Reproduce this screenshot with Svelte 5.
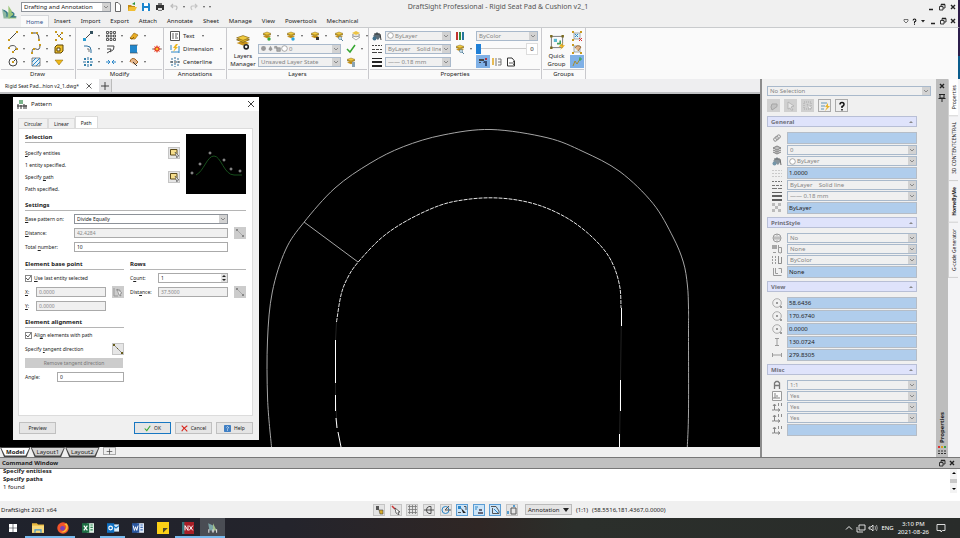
<script>

	// Icons, each drawn on a 10 x 10 grid:
	const node = (x, y) => `<rect x="${x}" y="${y}" width="2" height="2" fill="#c89a1e"/>`;
	const sheets = '<path d="M1 5.6 5 4.2 9 5.6 5 7.2Z" fill="#c8921a"/><path d="M1 3.6 5 2.2 9 3.6 5 5.2Z" fill="#e8bc2c" stroke="#7a5c10" stroke-width=".5"/><path d="M1 2.4 5 1 9 2.4 5 4Z" fill="#f1cb3f" stroke="#7a5c10" stroke-width=".4"/>';
	const icons = {
		line: `<path d="M1.5 8.5 8.5 1.5" stroke="#444"/>${node(0, 8)}${node(8, 0)}`,
		arc: `<path d="M2 2Q8 1 8 8" stroke="#444" fill="none"/>${node(0, 1)}${node(7, 8)}${node(5, 1)}`,
		points: `${node(1, 0)}${node(7, 1)}${node(4, 4)}${node(1, 8)}${node(7, 7)}<path d="M3 3 4 4M6 6 7 7M7 3 6 4" stroke="#555"/>`,
		polyline: `<path d="M1 4A3.5 3 0 1 1 8 5L5 8" stroke="#555" fill="none"/>${node(0, 3)}${node(8, 4)}${node(4, 7)}`,
		spline: `<path d="M1 9Q1 3 5 5T9 1" stroke="#555" fill="none"/>${node(0, 8)}${node(2, 4)}${node(8, 0)}`,
		box: '<path d="M1 3 3 1H9V7L7 9H1Z" fill="#efc02c" stroke="#5e4708"/><path d="M3 4H6V7H3Z" fill="#fff" stroke="#5e4708"/>',
		circle: '<circle cx="5" cy="5" r="4" fill="none" stroke="#444"/><path d="M5 5 8 2" stroke="#444"/><rect x="4" y="4" width="2" height="2" fill="#c89a1e"/>',
		hatch: '<path d="M1 1H9V9H1Z" fill="#e3f1fa" stroke="#555" stroke-width=".7"/><path d="M1 5 5 1M1 9 9 1M5 9 9 5" stroke="#2a86c8"/>',
		mask: '<path d="M1 3H9L5 8Z" fill="#efb91a" stroke="#8a6506" stroke-width=".5"/>',
		move: '<path d="M2 8 8 2" stroke="#444"/><rect x="0" y="7" width="3" height="3" fill="#2a9bd0"/><rect x="7" y="0" width="3" height="3" fill="#34515f"/>',
		pattern: '<path d="M.5 .5h2v2h-2ZM4 .5h2v2H4ZM7.500 .5h2v2h-2ZM.5 4h2v2h-2ZM4 4h2v2H4ZM7.500 4h2v2h-2ZM.5 7.500h2v2h-2ZM4 7.500h2v2H4ZM7.500 7.500h2v2h-2Z" fill="none" stroke="#333" stroke-width=".8"/>',
		eraser: '<path d="M1 7 5 2 9 4 6 8H2Z" fill="#e9ad24" stroke="#8a5d08" stroke-width=".6"/><path d="M1 7 3 8 5 6" stroke="#8a5d08" fill="none"/>',
		fillet: '<path d="M1 2H4Q8 2 8 6V9" stroke="#2a6f9e" fill="none"/><path d="M4 5H6V8" stroke="#777" fill="none"/>',
		offset: '<path d="M1 2H8Q9 6 4 8M1 5H5Q6 7 1 9" stroke="#444" fill="none"/>',
		stretch: '<path d="M1 1H8V9H1Z" fill="#2387cb"/><path d="M1 1H9M1 9H9" stroke="#444" stroke-width=".6"/>',
		explode: '<path d="M0 5H10" stroke="#555" stroke-width=".7"/><path d="M5 1 6 3 8 2 7 4 9 5 7 6 8 8 6 7 5 9 4 7 2 8 3 6 1 5 3 4 2 2 4 3Z" fill="#e5432d"/><circle cx="5" cy="5" r="1.300" fill="#f7c325"/>',
		scatter: '<path d="M5 0V3M5 7V10M0 5H3M7 5H10" stroke="#2a6f9e"/><path d="M4 4H6V6H4ZM1 1H3V3H1ZM7 1H9V3H7ZM1 7H3V9H1ZM7 7H9V9H7Z" fill="#3582ac"/>',
		split: '<path d="M0 5H4M6 5H10" stroke="#2a86c8"/><path d="M2 3 4 5 2 7M8 3 6 5 8 7" stroke="#2a86c8" fill="none"/>',
		edit: '<path d="M1 5Q2 0 6 2L9 5 6 8" fill="#e3b58b" stroke="#a46522"/><path d="M4 5 8 9" stroke="#333"/>',
		text: '<path d="M.5 .5H9.500V9.500H.5Z" fill="#fff" stroke="#555"/><path d="M2 3H4M5 3H8M2 5H4M5 5H7M2 7H4M5 7H8" stroke="#333" stroke-width=".8"/>',
		dimension: '<path d="M1 1V6M9 2V9M1 8H9" stroke="#2a86c8"/><path d="M6 0 3 4H5L3 8 8 3H6L8 0Z" fill="#ecb820"/>',
		centerline: '<path d="M5 0V4M5 6V10M2 1V9M8 1V9" stroke="#2a6f9e" stroke-dasharray="2 1"/><path d="M0 5H10" stroke="#444" stroke-dasharray="3 1"/>',
		layersGear: `${sheets}<circle cx="7" cy="8" r="1.300" fill="#fff" stroke="#222"/>`,
		layerOn: `${sheets}<circle cx="7" cy="8" r="1.700" fill="#36a33c"/>`,
		layerFreeze: `${sheets}<circle cx="7" cy="8" r="1.700" fill="#29a4dd"/>`,
		layerLock: `${sheets}<rect x="6" y="6" width="3" height="3" fill="#333"/>`,
		layerFind: `${sheets}<circle cx="6" cy="7" r="1.500" fill="#d7ecf8" stroke="#56819c" stroke-width=".7"/><path d="M7 8 9 10" stroke="#56819c"/>`,
		layerWhite: '<path d="M1 6 5 5 9 6 5 9ZM1 4 5 2 9 4 5 6Z" fill="#fff" stroke="#888" stroke-width=".7"/><path d="M1 2 5 0 9 2 5 4Z" fill="#edc445"/>',
		layerState: `${sheets}<path d="M6 5H9V10H6Z" fill="#8aa4b4"/>`,
		check: '<path d="M1 5 4 8 9 1" stroke="#35a630" stroke-width="1.500" fill="none"/>',
		cross: '<path d="M1 1Q4 4 9 9M9 1Q4 4 1 9" stroke="#d9251c" stroke-width="1.600" fill="none"/>',
		help: '<rect x="0" y="0" width="10" height="10" rx="1" fill="#3f7fc4"/><path d="M3.500 3.500Q5 1 6.500 3.500Q6 5 5 5.500V6.500M5 7.500V8.500" stroke="#fff" fill="none"/>',
		bulb: '<circle cx="5" cy="5" r="3.500" fill="#999"/>',
		drop: '<path d="M5 1 8 6 5 9 2 6Z" fill="#999"/>',
		lock: '<path d="M1 5V2H4V5M4 4H9V9H4Z" fill="#aaa" stroke="#888"/>',
		ring: '<circle cx="5" cy="5" r="4" fill="#fff" stroke="#888"/>',
		bucket: '<path d="M1 5 5 1 9 5 6 9Z" fill="#5b6c76"/><path d="M2 3H8L9 9" stroke="#333" fill="none"/><circle cx="2.500" cy="7.500" r="2" fill="#3f6f8b"/>',
		lineStyle: '<path d="M0 1.500H10" stroke="#444" stroke-dasharray="2 1"/><path d="M0 5.500H10" stroke="#444" stroke-dasharray="3 1"/><path d="M0 8.500H10" stroke="#444" stroke-dasharray="5 1"/>',
		lineWeight: '<path d="M0 1.500H10" stroke="#222"/><path d="M0 5H10M0 9H10" stroke="#222" stroke-width="2"/>',
		colors: '<path d="M2 1V9" stroke="#c2342d" stroke-width="2"/><path d="M5 1V9" stroke="#338d3c" stroke-width="2"/><path d="M8 1V9" stroke="#27769e" stroke-width="2"/>',
		match: '<path d="M1 2H6V4H1ZM1 5H3V6H1Z" fill="#444"/><path d="M6 4H9V9H7V6H5Z" fill="#394e75"/><path d="M7 1H9V3H7Z" fill="#a34"/>',
		list: '<path d="M1 1V8" stroke="#e0a61d" stroke-width="1.500"/><path d="M4 1V9M6 2H9V8H6M6 5H9" stroke="#777" fill="none"/>',
		page: '<path d="M1.500 1H6L8.500 4V9H1.500Z" fill="#fff" stroke="#333"/><path d="M3 6H9M7 4 9 6 7 8" stroke="#333" fill="none" stroke-width=".8"/>',
		group: `<path d="M1.500 1.500H8.500V8.500H1.500Z" stroke="#777" stroke-width=".6" fill="none"/><path d="M.7 .7H2.200V2.200H.7ZM7.800 .7H9.300V2.200H7.800ZM.7 7.800H2.200V9.300H.7Z" fill="#7a6a1e"/><path d="M3 3H5V5H3Z" fill="#59b8cf"/><path d="M5 6H7V4" stroke="#43a05f" fill="none"/><path d="M9 5 6 8H8L7 10 10 7H8Z" fill="#e9ae12"/>`,
		ungroup: `<path d="M2 2H8V8H2Z" stroke="#777" stroke-width=".6" fill="#e3f1f5"/>${node(0, 0)}${node(8, 0)}${node(0, 8)}<path d="M3 3 6 6M6 3 3 6" stroke="#2a86c8"/><path d="M7 7 10 10M10 7 7 10" stroke="#d33"/>`,
		groupEdit: `<path d="M2 2H8V8H2Z" stroke="#777" stroke-width=".6" fill="#e3f1f5"/>${node(0, 0)}${node(0, 8)}${node(8, 8)}<path d="M3 4Q5 0 9 3L6 7" fill="#e3b58b" stroke="#8d5a1e" stroke-width=".8"/>`,
		groupSelect: '<path d="M1 9 3 4 5 7 8 2" stroke="#a58d30" fill="none"/><path d="M7 2H10M8 0V4" stroke="#3aa64a"/>',
		fileNew: '<path d="M2.500 .5H5L7.500 3V9.500H2.500Z" fill="#fff" stroke="#444" stroke-width=".8"/>',
		fileOpen: '<path d="M1 9V3H4L5 4H8V9Z" fill="#c38a12"/><path d="M2 5H10L8 9H1Z" fill="#f1be33"/><path d="M5 2 8 0 8 3Z" fill="#2b9136"/>',
		save: '<path d="M1 1H8L9 2V9H1Z" fill="#1d86ce"/><path d="M3 1H7V4H3ZM3 6H7V9H3Z" fill="#fff"/>',
		print: '<path d="M3 1H7V4H3ZM3 7H7V9H3Z" fill="#777"/><path d="M1 3H9V8H1Z" fill="#333"/><path d="M3 6H7V8H3Z" fill="#ddd"/>',
		undo: '<path d="M2 4H7Q9 5 7 8M4 2 2 4 4 6" stroke="#bbb" fill="none" stroke-width="1.200"/>',
		redo: '<path d="M8 4H3Q1 5 3 8M6 2 8 4 6 6" stroke="#c5c5c5" fill="none" stroke-width="1.200"/>',
		min: '<path d="M3 7.500H7" stroke="#222" stroke-width="1.500"/>',
		restore: '<path d="M4 4V2.500H8V6H6M2.500 4.500H6V8H2.500Z" fill="none" stroke="#222" stroke-width=".9"/><path d="M4 2.500H8" stroke="#222" stroke-width="1.500"/>',
		close: '<path d="M3 3 7 7M7 3 3 7" stroke="#222" stroke-width="1.400"/>',
		thinClose: '<path d="M2.500 2.500 7.500 7.500M7.500 2.500 2.500 7.500" stroke="#333" stroke-width=".8"/>',
		caret: '<path d="M3 4H7L5 6.500Z" fill="#222"/>',
		heart: '<path d="M3 3.500H7V5L5 7 3 5Z" stroke="#555" fill="none" stroke-width=".8"/>',
		pin: '<path d="M2 1.500H8M3 1V5H7V1M1.500 5.500H8.500M5 5V9" stroke="#222" fill="none"/>',
		plus: '<path d="M5 1V9M1 5H9" stroke="#333" stroke-width=".9"/>',
		pick: '<path d="M1.500 1.500H8V7H1.500Z" fill="#f6de8c" stroke="#5c4b1b"/><path d="M6 4 10 8 8 8 8 10Z" fill="#fff" stroke="#333" stroke-width=".5"/>',
		pickGrey: '<path d="M1 1V9H5M3 3H7V6" fill="none" stroke="#999"/><path d="M4 2 9 6 7 7 8 9 6 8Z" fill="#eee" stroke="#777" stroke-width=".6"/>',
		slope: '<path d="M1 1 9 9" stroke="#555" stroke-width=".6"/><path d="M0 0H2V2H0ZM8 8H10V10H8ZM4 4H5V5H4Z" fill="#665c1c"/>',
		slopeGrey: '<path d="M1 1 9 9" stroke="#999" stroke-width=".7"/><path d="M1 1H3V3H1ZM7 7H9V9H7Z" fill="#888"/>',
		link: '<rect x="1" y="4" width="5" height="3" rx="1" transform="rotate(-45 4 5)" fill="none" stroke="#777"/><rect x="4" y="3" width="5" height="3" rx="1" transform="rotate(-45 6 5)" fill="none" stroke="#777"/>',
		layersGrey: '<path d="M1 3 5 1 9 3 5 5ZM1 5 5 7 9 5M1 7 5 9 9 7" fill="#aaa" stroke="#555"/>',
		scale: '<path d="M0 2.500H10M0 5.500H10M0 8.500H10" stroke="#bbb" stroke-dasharray="2 1"/>',
		grid9: '<path d="M0 0H3V3H0ZM6 0H9V3H6ZM3 3H6V6H3ZM0 6H3V9H0ZM6 6H9V9H6Z" fill="#a5a5a5"/>',
		globe: '<circle cx="5" cy="5" r="4" fill="none" stroke="#777"/><path d="M5 1V9M1 5H9M3 3V7M7 3V7" stroke="#777" stroke-width=".7"/>',
		table: '<path d="M0 1H5V5H0Z" fill="#888"/><path d="M1 8.500H4M6.500 1V8.500L9 9M7 3.500H9.500V9" stroke="#777" fill="none"/>',
		bars: '<path d="M.5 1V9M3.500 1V9" stroke="#777" stroke-dasharray="2 1"/><path d="M6.500 1V9M9.500 2V8.500H6" stroke="#666" fill="none"/>',
		axes: '<path d="M1.500 1V8.500H9.500M3.500 1V6.500H6M6.500 1.500H9.500V6" stroke="#777" fill="none"/>',
		target: '<circle cx="5" cy="5" r="4.300" fill="none" stroke="#777" stroke-width=".8"/><path d="M4 4H6V6H4Z" fill="#777"/><path d="M8 8H10V10H8Z" fill="#777"/>',
		height: '<path d="M3 1.500H7M3 8.500H7M5 2V8" stroke="#777"/>',
		width: '<path d="M.5 3V7M9.500 3V7M1 5H9" stroke="#777"/>',
		letter: '<path d="M2.500 9V3L4 1.500H6L7.500 3V9M2.500 5.500H7.500" stroke="#444" stroke-width="1.300" fill="none"/>',
		ucsBox: '<path d="M.5 .5H9.500V9.500H.5Z" fill="#fff" stroke="#777"/><path d="M3 2V7H8M5 4V6M1 7H3" stroke="#555" fill="none"/>',
		ucs: '<path d="M2.500 3V8H7M1 4 2.500 2 4 4M6 6.500 8 8 6 9.500M0 8H2" stroke="#444" fill="none" stroke-width=".9"/><path d="M6 1H7V4H6ZM9 1H10V4H9Z" fill="#666"/>',
		hand: '<path d="M3 3H8Q9 6 6 7L3 9 2 6Z" fill="#c2c2c2" stroke="#a5a5a5"/>',
		arrow: '<path d="M2 1 8 5 5 6 7 9 5 9 4 7 2 8Z" fill="#e5e5e5" stroke="#aaa" stroke-width=".7"/>',
		arrowBox: '<path d="M1 1H8V8H1Z" fill="none" stroke="#aaa" stroke-dasharray="1 1"/><path d="M4 3 9 7 6 8Z" fill="#eee" stroke="#aaa" stroke-width=".6"/>',
		quick: '<path d="M1 2H7M1 5H5M1 8H4" stroke="#6295b5"/><path d="M8 2 5 6H7L5 10 10 5H8Z" fill="#e8b42b"/>',
		question: '<path d="M3 3.500Q3 1.500 5 1.500T7 3.500Q7 5 5 5.500V7M5 8V9.500" stroke="#111" stroke-width="1.500" fill="none"/>',
		palette: '<path d="M1 1H3V3H1Z" fill="#d33"/><path d="M4 1H6V3H4Z" fill="#dba11c"/><path d="M7 1H9V3H7Z" fill="#3c9c46"/><path d="M1 6H9M1 8.500H9" stroke="#333" stroke-dasharray="2 1"/>',
		snapBulb: '<path d="M2 1H5V5H2Z" fill="#555"/><path d="M5 5H9V9H6Z" fill="#d8ac28" stroke="#444" stroke-width=".6"/>',
		snapArrow: '<path d="M1 1 4 4" stroke="#c33" stroke-width="1.500"/><path d="M4 3 9 7 7 7 8 10 5 8Z" fill="#fff" stroke="#333" stroke-width=".7"/>',
		grid: '<path d="M1 1.500H10M1 4.500H10M1 7.500H10M2.500 0V9M5.500 0V9M8.500 0V9" stroke="#777" stroke-width=".8"/>',
		ortho: '<path d="M0 5H10M2.500 5A3.500 3.500 0 0 1 5 1.500H7V8.500H5A3.500 3.500 0 0 1 2.500 5" stroke="#444" fill="none" stroke-width=".9"/>',
		polar: '<circle cx="4.500" cy="5" r="3.500" fill="none" stroke="#2a86c8"/><path d="M4 5H10M4 5 8 1" stroke="#555"/>',
		esnap: '<path d="M1 1H4V4H1Z" fill="#2a86c8"/><path d="M4 3 9 8 6 8Z" fill="#222"/><path d="M1 7.500H4M7 1.500H9V5" stroke="#555" fill="none"/>',
		etrack: '<path d="M1 2H4M1 4H3" stroke="#2a86c8"/><path d="M5 4H8V6H5ZM4 7H9V9H4Z" fill="#667"/>',
		lasso: '<path d="M1 1.500H6L9 6V8.500H2.500V3" stroke="#555" fill="none"/><path d="M4 4 8 8" stroke="#2a86c8"/>',
		dynamic: '<path d="M4 3H9V9H4Z" fill="none" stroke="#555"/><path d="M1 6V9M7 0V2" stroke="#2a86c8" stroke-width="1.500"/>',
		pattern2: '<path d="M2 1H6V5H2Z" fill="#7ab48b"/><path d="M0 7H10M1 5V10M4 6V10M7 5V10M9 6V10" stroke="#333"/>',
		logo: '<path d="M0 3 5 6V9H1Z" fill="#8fb8a0"/><path d="M4 1 9 9H4Z" fill="#9cc67a"/><path d="M1 4Q4 5 3 8M6 5Q9 6 6 8H9" stroke="#2d7287" fill="none" stroke-width=".8"/>',
		windows: '<path d="M1 1H4.700V4.700H1ZM5.300 1H9V4.700H5.300ZM1 5.300H4.700V9H1ZM5.300 5.300H9V9H5.300Z" fill="#fff"/>',
		explorer: '<path d="M0 1H4L5 2H10V9H0Z" fill="#e8b83d"/><path d="M0 3H10V9H0Z" fill="#f8da7c"/><path d="M2 9V6H8V9H7V7H3V9Z" fill="#3f94cf"/>',
		firefox: '<circle cx="5" cy="5" r="4.800" fill="#f2532c"/><path d="M8 1Q10 4 8 7T2 8Q5 9 7 6T6 2Z" fill="#fbbd30"/><circle cx="4.600" cy="5.300" r="2" fill="#7a43b8"/>',
		excel: '<path d="M4 1H10V9H4Z" fill="#dff0e5"/><path d="M7 2.500H9M7 4.500H9M7 6.500H9" stroke="#2f8a57"/><path d="M0 1H6V9H0Z" fill="#1d7044"/><path d="M1.500 3 4.500 7M4.500 3 1.500 7" stroke="#fff"/>',
		outlook: '<path d="M5 2H10V8H5Z" fill="#d7ecfb"/><path d="M5 3 7.500 5 10 3" stroke="#1274c4" fill="none"/><path d="M0 1H6V9H0Z" fill="#0f6fc0"/><circle cx="3" cy="5" r="1.500" fill="none" stroke="#fff"/>',
		word: '<path d="M4 1H10V9H4Z" fill="#e1eaf7"/><path d="M7 2.500H9M7 4.500H9M7 6.500H9" stroke="#3f6fb8"/><path d="M0 1H6V9H0Z" fill="#2a57a0"/><path d="M1 3 2 7 3 4 4 7 5 3" stroke="#fff" fill="none" stroke-width=".8"/>',
		notes: '<path d="M0 0H10V10H0Z" fill="#fcd116"/><path d="M5 9V5H9Z" fill="#4f4a2b"/>',
		nx: '<path d="M0 0H10V10H0Z" fill="#a81f26"/><path d="M0 0H2V10H0Z" fill="#34777c"/><path d="M2.500 7V3L5 7V3M6 3 9 7M9 3 6 7" stroke="#fff" fill="none" stroke-width=".8"/>',
		draftsight: '<path d="M1 1 5 3V7H2Z" fill="#79a4a6"/><path d="M5 1 8 7H5Z" fill="#a2c08c"/><path d="M1.500 6V9M4 7.500H6M5 6V9M8 6V9" stroke="#ddd" stroke-width=".9"/>',
		up: '<path d="M2 6.500 5 3.500 8 6.500" stroke="#eee" fill="none"/>',
		monitor: '<path d="M3 2H9V7H3ZM1 4V9H7" stroke="#eee" fill="none" stroke-width=".9"/>',
		speaker: '<path d="M1 4H3L5 2V8L3 6H1Z" stroke="#eee" fill="none" stroke-width=".9"/><path d="M7 3Q8 5 7 7M8.500 2Q10 5 8.500 8" stroke="#bbb" fill="none" stroke-width=".8"/>',
		bubble: '<path d="M1 1.500H9V7.500H6.500L5 9V7.500H1Z" stroke="#eee" fill="none" stroke-width=".9"/>'
	};

	// Ribbon contents; a trailing "+" marks a button that opens a menu:
	const menus = ['Home', 'Insert', 'Import', 'Export', 'Attach', 'Annotate', 'Sheet', 'Manage', 'View', 'Powertools', 'Mechanical'];
	const draw = ['line+', 'arc+', 'points+', 'polyline+', 'spline+', 'box', 'circle+', 'hatch+', 'mask'];
	const modify = ['move+', 'pattern+', 'eraser+', '', 'fillet+', 'offset', 'stretch', 'explode', 'scatter+', 'split+', 'edit+', ''];
	const annotations = [['text', 'Text', true], ['dimension', 'Dimension', true], ['centerline', 'Centerline', false]];
	const layerTools = ['layerOn+', 'layerFreeze+', 'layerLock+', 'layerFind', 'layerWhite+'];

	// Property sections: icon, label, value, kind, icon inside the field
	const solidLine = 'ByLayer\u00a0\u00a0\u00a0\u00a0Solid line';
	const sections = [
		['General', [
			['link', 'Hyperlink', '', 'text'],
			['layersGrey', 'Layer', '0', 'list'],
			['bucket', 'Line color', 'ByLayer', 'list', 'ring'],
			['scale', 'Line scale', '1.0000', 'text'],
			['lineStyle', 'Line style', solidLine, 'list'],
			['lineWeight', 'Line weight', '—— 0.18 mm', 'list'],
			['grid9', 'Transparency', 'ByLayer', 'text']
		]],
		['PrintStyle', [
			['globe', 'Print style', 'No', 'list'],
			['table', 'Print table', 'None', 'list'],
			['bars', 'Style type', 'ByColor', 'list'],
			['axes', 'Attached to', 'None', 'text']
		]],
		['View', [
			['target', 'Center X', '58.6436', 'text'],
			['target', 'Center Y', '170.6740', 'text'],
			['target', 'Center Z', '0.0000', 'text'],
			['height', 'Height', '130.0724', 'text'],
			['width', 'Width', '279.8305', 'text']
		]],
		['Misc', [
			['letter', 'Annotation scale', '1:1', 'list'],
			['ucsBox', 'Icon on', 'Yes', 'list'],
			['ucs', 'Icon at origin', 'Yes', 'list'],
			['ucs', 'Per viewport', 'Yes', 'list'],
			['ucs', 'Coordinate system', '', 'text']
		]]
	];
	const sideTabs = ['Properties', '3D CONTENTCENTRAL', 'HomeByMe', 'G-code Generator'];
	const statusTools = ['snapBulb', 'snapArrow', 'grid', 'ortho', 'polar', 'esnap', 'etrack', 'lasso', 'dynamic'];
	const statusOn = ['esnap', 'etrack', 'lasso'];
	const apps = ['windows', 'explorer', 'firefox', 'excel', 'outlook', 'word', 'notes', 'nx', 'draftsight'];
	const runningApps = ['explorer', 'firefox', 'outlook', 'nx', 'draftsight'];

	// Cushion outlines in drawing units:
	const outer = [[271.5, 353], [267.6, 305], [267.5, 246], [272.3, 198], [285.5, 156], [304, 128.3], [335, 94], [370, 69.3], [403.3, 52.7], [443, 41], [491, 35.5], [547, 43.7], [583, 57.5], [620, 77.7], [653, 109.5], [673, 143], [683.3, 168], [687.4, 191], [688.5, 214], [688.5, 240], [688.5, 318], [687.3, 353]];
	const inner = [[336.5, 228], [341, 201], [347.5, 184], [358, 168.3], [381.7, 143.7], [408, 126], [440, 111.3], [465, 105.7], [491, 103.8], [517, 106], [542, 112.3], [567, 124], [588, 139.3], [605, 157], [614.5, 174], [620, 194], [621, 214]];

	// Function to run a smooth curve through a list of points:
	const curve = (pts) => {
		let d = `M${pts[0]}`;
		for(let i = 0; i < pts.length - 1; i++) {
			const [a, b, c, e] = [pts[i - 1] || pts[i], pts[i], pts[i + 1], pts[i + 2] || pts[i + 1]];
			d += `C${b[0] + (c[0] - a[0]) / 6},${b[1] + (c[1] - a[1]) / 6} ${c[0] - (e[0] - b[0]) / 6},${c[1] - (e[1] - b[1]) / 6} ${c}`;
		}
		return d;
	};

	let lastEntity = $state(true);
	let alignPath = $state(true);

</script>

{#snippet icon(name, size = 's10')}
	<svg class="icon {size}" viewBox="0 0 10 10" aria-hidden="true">{@html icons[name]}</svg>
{/snippet}

{#snippet tool(entry)}
	{#if entry}
		<button class="tool" aria-label={entry.replace('+', '')}>
			{@render icon(entry.replace('+', ''))}
			{#if entry.endsWith('+')}<i class="drop"></i>{/if}
		</button>
	{:else}
		<span></span>
	{/if}
{/snippet}

{#snippet combo(label, value, inside = [], disabled = true)}
	<span class="combo" class:disabled>
		{#each inside as name}{@render icon(name, 's7')}{/each}
		<select aria-label={label} {disabled}><option>{value}</option></select>
	</span>
{/snippet}

<div class="app">

	<!-- Title Bar and Menu -->
	<header>
		<div class="logo">{@render icon('logo', 's16')}</div>
		<div class="bars">
			<div class="titleBar">
				<div class="workspace">{@render combo('Workspace', 'Drafting and Annotation', [], false)}</div>
				<div class="quick">
					{#each ['fileNew', 'fileOpen', 'save', 'print', 'undo', 'redo'] as name}
						<button aria-label={name}>{@render icon(name)}</button>
						{#if name === 'undo' || name === 'redo'}<i class="drop"></i>{/if}
					{/each}
					<i class="drop"></i>
				</div>
				<h1>DraftSight Professional - Rigid Seat Pad &amp; Cushion v2_1</h1>
				<div class="controls wide">
					{#each ['min', 'restore', 'close'] as name}<button aria-label={name}>{@render icon(name)}</button>{/each}
				</div>
			</div>
			<nav>
				{#each menus as menu, i}<button class:active={i === 0}>{menu}</button>{/each}
				<div class="controls">
					{#each ['heart', 'question', 'caret', 'min', 'restore', 'close'] as name}<button aria-label={name}>{@render icon(name, name === 'question' ? 's7' : 's10')}</button>{/each}
				</div>
			</nav>
		</div>
	</header>

	<!-- Ribbon -->
	<div class="ribbon">
		<section class="draw">
			<div class="tools three">{#each draw as entry}{@render tool(entry)}{/each}</div>
			<h2>Draw</h2>
		</section>
		<section class="modify">
			<div class="tools four">{#each modify as entry}{@render tool(entry)}{/each}</div>
			<h2>Modify</h2>
		</section>
		<section class="annotations">
			<div class="tools one">
				{#each annotations as [name, label, more]}
					<button class="labelled">{@render icon(name)}{label}{#if more}<i class="drop"></i>{/if}</button>
				{/each}
			</div>
			<h2>Annotations</h2>
		</section>
		<section class="layerGroup">
			<div class="split">
				<button class="big">{@render icon('layersGear', 's16')}Layers<br>Manager</button>
				<div class="rows">
					<div class="line">{#each layerTools as entry}{@render tool(entry)}{/each}</div>
					<div class="line">{@render combo('Active layer', '0', ['bulb', 'drop', 'lock', 'ring'])}{@render tool('check+')}</div>
					<div class="line">{@render combo('Layer state', 'Unsaved Layer State')}{@render tool('layerState')}</div>
				</div>
			</div>
			<h2>Layers</h2>
		</section>
		<section class="properties">
			<div class="split">
				<div class="rows first">
					<div class="line">{@render icon('bucket')}{@render combo('Line color', 'ByLayer', ['ring'])}</div>
					<div class="line">{@render icon('lineStyle')}{@render combo('Line style', solidLine)}</div>
					<div class="line">{@render icon('lineWeight')}{@render combo('Line weight', '—— 0.18 mm')}</div>
				</div>
				<div class="rows">
					<div class="line">{@render tool('colors')}</div>
					<div class="line">{@render tool('layerFind+')}</div>
				</div>
				<div class="rows last">
					<div class="line">{@render combo('Print style', 'ByColor')}</div>
					<div class="line"><input type="range" aria-label="Transparency" value="0"><input class="amount" aria-label="Transparency value" value="0"></div>
					<div class="line toggles">
						<button class="on" aria-label="Match properties">{@render icon('match')}</button>
						<button aria-label="List">{@render icon('list')}</button>
						<button aria-label="Page">{@render icon('page')}</button>
					</div>
				</div>
			</div>
			<h2>Properties</h2>
		</section>
		<section class="groups">
			<div class="split">
				<button class="big">{@render icon('group', 's16')}Quick<br>Group</button>
				<div class="rows toggles">
					<button aria-label="Ungroup">{@render icon('ungroup')}</button>
					<button aria-label="Edit group">{@render icon('groupEdit')}</button>
					<button class="on" aria-label="Group selection">{@render icon('groupSelect')}</button>
				</div>
			</div>
			<h2>Groups</h2>
		</section>
	</div>

	<main>
		<div class="work">
			<div class="docs">
				<button class="doc">Rigid Seat Pad...hion v2_1.dwg*{@render icon('thinClose')}</button>
				<button class="add" aria-label="New drawing">{@render icon('plus')}</button>
			</div>

			<!-- Drawing -->
			<div class="canvas">
				<svg class="drawing" viewBox="0 0 760 353" preserveAspectRatio="xMinYMin slice" aria-label="Drawing">
					<path d={curve(outer)} class="solid" />
					<path d="M304 128 358 168" class="solid" />
					<path d={curve(inner)} class="dashed" />
					<path d="M336.500 228 335.500 246V305L337 334M621.500 214 620.500 286 619.500 353" class="faint" />
					<path d="M335.500 246V289M335.500 301V317M336 324 337 334M338 338 341 353M621.500 214V232M620.500 286V317M619.500 340V353" class="bright" />
				</svg>

				<!-- Pattern Dialog -->
				<div class="dialog" role="dialog" aria-label="Pattern">
					<div class="dialogTitle">{@render icon('pattern2')}<span>Pattern</span><button aria-label="Close">{@render icon('thinClose', 's12')}</button></div>
					<div class="dialogTabs">
						<button>Circular</button><button>Linear</button><button class="active">Path</button>
					</div>
					<div class="pane">
						<div class="selection">
							<div class="picks">
								<h3>Selection</h3>
								<div class="pickRow"><span><u>S</u>pecify entities</span><button class="square" aria-label="Specify entities">{@render icon('pick')}</button></div>
								<div class="pickRow">1 entity specified.</div>
								<div class="pickRow"><span>Specify <u>p</u>ath</span><button class="square" aria-label="Specify path">{@render icon('pick')}</button></div>
								<div class="pickRow">Path specified.</div>
							</div>
							<svg class="preview" viewBox="0 0 60 60" aria-label="Path preview">
								<path d="M10 41C18 37 21 22 28 22S38 41 48 41H56" fill="none" stroke="#174f1c" />
								<g fill="none" stroke="#ccc" stroke-width=".8"><circle cx="6" cy="39" r="1" /><circle cx="14" cy="30" r="1" /><circle cx="24" cy="19" r="1" /><circle cx="38" cy="26" r="1" /><circle cx="45" cy="35" r="1" /><circle cx="54" cy="37" r="1" /></g>
							</svg>
						</div>
						<h3>Settings</h3>
						<div class="field wideLabel"><label for="base"><u>B</u>ase pattern on:</label><span class="combo"><select id="base"><option>Divide Equally</option></select></span></div>
						<div class="field wideLabel"><label for="distance"><u>D</u>istance:</label><input id="distance" value="42.4284" disabled><button class="square off" aria-label="Pick distance" disabled>{@render icon('slopeGrey')}</button></div>
						<div class="field wideLabel"><label for="total">Total <u>n</u>umber:</label><input id="total" value="10"></div>
						<div class="halves">
							<div>
								<h3>Element base point</h3>
								<div class="field"><label class="tick"><input type="checkbox" bind:checked={lastEntity}><span><u>U</u>se last entity selected</span></label></div>
								<div class="field point"><label for="px"><u>X</u>:</label><input id="px" value="0.0000" disabled><button class="square off" aria-label="Pick base point" disabled>{@render icon('pickGrey')}</button></div>
								<div class="field point"><label for="py"><u>Y</u>:</label><input id="py" value="0.0000" disabled></div>
								<h3>Element alignment</h3>
								<div class="field"><label class="tick"><input type="checkbox" bind:checked={alignPath}><span>Ali<u>g</u>n elements with path</span></label></div>
								<div class="field tangent"><span>Specify <u>t</u>angent direction</span><button class="square" aria-label="Specify tangent direction">{@render icon('slope')}</button></div>
								<div class="field"><button class="remove" disabled>Remove tangent direction</button></div>
								<div class="field angle"><label for="angle">Angle:</label><input id="angle" value="0"></div>
							</div>
							<div>
								<h3>Rows</h3>
								<div class="field rowsField"><label for="count">C<u>o</u>unt:</label><span class="spin"><input id="count" value="1"><svg viewBox="0 0 6 8" aria-hidden="true"><path d="M1 3H5L3 1ZM1 5H5L3 7Z" fill="#222" /></svg></span></div>
								<div class="field rowsField"><label for="rowDistance">Dist<u>a</u>nce:</label><input id="rowDistance" value="37.5000" disabled><button class="square off" aria-label="Pick row distance" disabled>{@render icon('slopeGrey')}</button></div>
							</div>
						</div>
					</div>
					<div class="actions">
						<button>Preview</button>
						<span class="spacer"></span>
						<button class="default">{@render icon('check', 's7')}OK</button>
						<button>{@render icon('cross', 's7')}Cancel</button>
						<button>{@render icon('help', 's7')}Help</button>
					</div>
				</div>
			</div>

			<div class="sheets">
				<button class="active"><span>Model</span></button>
				<button><span>Layout1</span></button>
				<button><span>Layout2</span></button>
				<button class="addSheet" aria-label="New layout">{@render icon('plus', 's7')}</button>
			</div>
		</div>

		<!-- Properties Palette -->
		<aside>
			<div class="choice">{@render combo('Selection', 'No Selection')}</div>
			<div class="paletteTools">
				{#each ['hand', 'arrow', 'arrowBox', 'quick', 'question'] as name, i}
					<button class:off={i < 3} aria-label={name}>{@render icon(name)}</button>
				{/each}
			</div>
			{#each sections as [title, rows]}
				<section class="block">
					<h2>{title}<i></i></h2>
					{#each rows as [name, label, value, kind, inside]}
						<div class="property">
							<span class="mark">{@render icon(name)}</span>
							{#if kind === 'list'}
								{@render combo(label, value, inside ? [inside] : [])}
							{:else}
								<input aria-label={label} {value}>
							{/if}
						</div>
					{/each}
				</section>
			{/each}
		</aside>
		<div class="strip">
			<button aria-label="Close palette">{@render icon('close')}</button>
			<button aria-label="Pin palette">{@render icon('pin')}</button>
			<strong>Properties</strong>
			{@render icon('palette')}
		</div>
		<div class="sideTabs">
			{#each sideTabs as tab, i}<button class:active={i === 0} class:strong={i === 2}>{tab}</button>{/each}
		</div>
	</main>

	<!-- Command Window -->
	<div class="command">
		<div class="commandTitle"><strong>Command Window</strong><button aria-label="Float">{@render icon('restore')}</button><button aria-label="Close">{@render icon('close')}</button></div>
		<div class="log">
			<div class="lines"><p><b>Specify entitiess</b></p><p><b>Specify paths</b></p><p>1 found</p></div>
			<div class="scroll"><i class="upArrow"></i><i class="thumb"></i><i class="downArrow"></i></div>
		</div>
	</div>

	<div class="status">
		<span class="version">DraftSight 2021 x64</span>
		<div class="statusTools">
			{#each statusTools as name}
				<button class:on={statusOn.includes(name)} aria-label={name}>{@render icon(name)}</button>
			{/each}
		</div>
		<button class="scaleList">Annotation<i></i></button>
		<span>(1:1)</span>
		<span>(58.5516,181.4367,0.0000)</span>
	</div>

	<!-- Taskbar -->
	<footer>
		{#each apps as name}
			<button class="appButton" class:running={runningApps.includes(name)} class:current={name === 'draftsight'} aria-label={name}>{@render icon(name, name === 'windows' ? 's10' : 's12')}</button>
		{/each}
		<div class="tray">
			{@render icon('up')}{@render icon('monitor')}{@render icon('speaker')}
			<span>ENG</span>
			<time>3:10 PM<br>2021-08-26</time>
			{@render icon('bubble')}
		</div>
	</footer>
</div>

<style>

	:global(body) {
		background: #f0f0f0;
	}

	.app {
		display: flex;
		flex-direction: column;
		min-height: 100vh;
		color: #222;
		background: #f0f0f0;
		font: 6px/8px "Noto Sans", "Open Sans", sans-serif;
	}

	.app :is(button, input, select) {
		box-sizing: border-box;
		min-width: 0;
		margin: 0;
		padding: 0;
		border: 0;
		border-radius: 0;
		color: inherit;
		background: none;
		font: inherit;
	}

	.app :is(h1, h2, h3, p) {
		margin: 0;
		font-size: 6px;
		font-weight: 400;
	}

	.icon {
		display: block;
		flex: none;
	}

	.s7 {
		width: 7px;
		height: 7px;
	}

	.s10 {
		width: 10px;
		height: 10px;
	}

	.s12 {
		width: 12px;
		height: 12px;
	}

	.s16 {
		width: 16px;
		height: 16px;
	}

	.drop {
		flex: none;
		width: 0;
		border: 1px solid transparent;
		border-top: 2px solid #555;
		border-bottom: 0;
	}

	.combo {
		display: flex;
		flex: 1;
		align-items: center;
		box-sizing: border-box;
		min-width: 0;
		height: 10px;
		padding-left: 1px;
		border: 1px solid #8d9299;
		background: #fff;
	}

	.app .combo select {
		flex: 1;
		width: 100%;
		height: 8px;
		padding: 0 9px 0 1px;
		appearance: none;
		background: url("data:image/svg+xml,%3Csvg xmlns='http://www.w3.org/2000/svg' width='8' height='8'%3E%3Cpath d='M0 0H8V8H0Z' fill='%23d2d2d2'/%3E%3Cpath d='M2 3L4 5L6 3' fill='none' stroke='%23777' stroke-width='.8'/%3E%3C/svg%3E") no-repeat right center;
		line-height: 8px;
		opacity: 1;
	}

	.combo.disabled {
		border-color: #a9b9cb;
		color: #858585;
		background: #f0f0f0;
	}

	/* Title bar and menu */

	header {
		display: flex;
		border-bottom: 1px solid #c9cbcd;
		border-right: 2px solid #2d1a48;
	}

	.logo {
		width: 21px;
		padding: 4px 0 0 2px;
		box-sizing: border-box;
	}

	.bars {
		flex: 1;
	}

	.titleBar {
		display: flex;
		align-items: center;
		height: 14px;
	}

	.workspace {
		display: flex;
		width: 90px;
	}

	.quick {
		display: flex;
		align-items: center;
		gap: 4px;
		margin-left: 2px;
	}

	.app h1 {
		flex: 1;
		padding-right: 141px;
		color: #555;
		font-size: 7px;
		text-align: center;
	}

	.controls {
		display: flex;
		align-items: center;
		margin-left: auto;
	}

	.wide {
		gap: 1px;
	}

	nav {
		display: flex;
		height: 13px;
		padding-top: 1px;
		box-sizing: border-box;
	}

	nav > button {
		padding: 0 5px !important;
	}

	.app nav > .active {
		border: 1px solid #d5d7da;
		border-width: 1px 1px 0 0;
		color: #33558e;
		background: #fafafa;
	}

	/* Ribbon */

	.ribbon {
		display: flex;
		height: 51px;
		border-right: 2px solid;
		border-image: linear-gradient(#2b1d4b 55%, #0a5c8c 55%) 1;
		background: #fafafa;
	}

	.ribbon > section {
		display: flex;
		flex-direction: column;
		box-sizing: border-box;
		padding: 1px 1px 0;
		border-right: 1px solid #c9c9cd;
	}

	.ribbon h2 {
		border-top: 1px solid #c9c9cd;
		line-height: 9px;
		text-align: center;
	}

	.tools {
		display: grid;
		flex: 1;
		grid-template-rows: repeat(3, 13px);
	}

	.draw {
		width: 76px;
	}

	.modify {
		width: 88px;
	}

	.annotations {
		width: 63px;
	}

	.layerGroup {
		width: 142px;
	}

	.properties {
		width: 173px;
	}

	.groups {
		width: 44px;
	}

	.three {
		grid-template-columns: 23px 23px 1fr;
		padding-left: 7px;
	}

	.four {
		grid-template-columns: 23px 23px 23px 1fr;
		padding-left: 6px;
	}

	.one {
		padding: 0 5px;
	}

	.tool, .labelled {
		display: flex;
		align-items: center;
	}

	.tool .drop {
		margin-left: 5px;
	}

	.app .labelled {
		gap: 3px;
	}

	.labelled .drop {
		margin-left: 4px;
	}

	.split {
		display: flex;
		flex: 1;
	}

	.big {
		display: flex;
		flex: none;
		flex-direction: column;
		align-items: center;
		width: 30px;
	}

	.app .big {
		padding-top: 5px;
		text-align: center;
	}

	.groups .big {
		width: 27px;
	}

	.big .icon {
		margin-bottom: 2px;
	}

	.rows {
		display: grid;
		grid-template-rows: repeat(3, 13px);
	}

	.layerGroup .rows {
		flex: 1;
	}

	.line {
		display: flex;
		align-items: center;
	}

	.layerGroup .line {
		gap: 5px;
		padding-right: 4px;
	}

	.layerGroup .line:first-child {
		gap: 7px;
		padding: 0 0 0 4px;
	}

	.layerGroup .line:not(:first-child) .tool {
		width: 18px;
	}

	.properties .split {
		gap: 4px;
		padding: 0 2px;
	}

	.properties .first {
		flex: none;
		grid-template-columns: minmax(0, 1fr);
		width: 79px;
	}

	.first .line {
		gap: 3px;
	}

	.properties .last {
		flex: 1;
		grid-template-columns: minmax(0, 1fr);
		min-width: 0;
	}

	.app input[type="range"] {
		flex: 1;
		height: 10px;
		appearance: none;
		background: linear-gradient(#ccc, #ccc) no-repeat center / 100% 1px;
	}

	input[type="range"]::-webkit-slider-thumb {
		width: 5px;
		height: 10px;
		appearance: none;
		background: #1f7fd6;
	}

	.app .amount {
		width: 12px;
		height: 12px;
		border: 1px solid #ddd;
		background: #fff;
		text-align: center;
	}

	.toggles button {
		display: grid;
		place-items: center;
		width: 14px;
		height: 13px;
	}

	.app .toggles .on {
		background: #7fb0e6;
	}

	/* Drawing area */

	main {
		display: flex;
		flex: 1;
	}

	.work {
		display: flex;
		flex: 1;
		flex-direction: column;
		min-width: 0;
	}

	.docs {
		display: flex;
		height: 15px;
		box-sizing: border-box;
		border-bottom: 2px solid #c0c1c4;
		background: #eeeef0;
	}

	.doc {
		display: flex;
		align-items: center;
	}

	.app .doc {
		gap: 5px;
		padding: 0 5px;
		background: #fff;
		font-size: 5px;
	}

	.app .add {
		width: 13px;
		padding: 0 1px;
		border-right: 1px solid #bbb;
		background: #e3e3e5;
	}

	.canvas {
		position: relative;
		flex: 1;
		min-height: 353px;
		background: #000;
	}

	.drawing {
		position: absolute;
		width: 100%;
		height: 100%;
	}

	.drawing path {
		fill: none;
	}

	.solid {
		stroke: #a5a5a5;
	}

	.dashed {
		stroke: #e5e5e5;
		stroke-dasharray: 4 1;
	}

	.faint {
		stroke: #222;
	}

	.bright {
		stroke: #fff;
	}

	/* Pattern dialog */

	.dialog {
		position: absolute;
		top: 3px;
		left: 13px;
		width: 246px;
		background: #f0f0f0;
		font-size: 5px;
	}

	.dialogTitle {
		display: flex;
		align-items: center;
		gap: 4px;
		height: 14px;
		padding: 0 2px 0 4px;
		background: #fff;
		font-size: 6px;
	}

	.app .dialogTitle button {
		margin-left: auto;
	}

	.dialogTabs {
		display: flex;
		align-items: flex-end;
		height: 17px;
		padding-left: 5px;
	}

	.app .dialogTabs button {
		height: 10px;
		padding: 0 5px;
		border: 1px solid #dcdcdc;
		border-bottom: 0;
	}

	.app .dialogTabs .active {
		height: 12px;
		background: #fff;
	}

	.pane {
		height: 288px;
		box-sizing: border-box;
		margin: 0 6px 0 5px;
		padding: 3px 6px;
		border: 1px solid #dcdcdc;
		background: #fff;
	}

	.app h3 {
		margin: 5px 0 1px;
		border-bottom: 1px solid #b5b5b5;
		font-weight: 700;
		line-height: 10px;
	}

	.selection {
		display: flex;
		gap: 6px;
	}

	.picks {
		flex: 1;
	}

	.app .picks h3 {
		margin: 0 0 4px;
	}

	.pickRow {
		display: flex;
		align-items: center;
		justify-content: space-between;
		height: 12px;
	}

	.preview {
		width: 60px;
		height: 60px;
		margin-top: 2px;
		background: #000;
	}

	.app .square {
		display: grid;
		flex: none;
		place-items: center;
		width: 12px;
		height: 12px;
		border: 1px solid #c5c5c5;
		background: #e6e6e6;
	}

	.app .square.off {
		border: 0;
		background: #ccc;
	}

	.field {
		display: flex;
		align-items: center;
		height: 14px;
	}

	.field .combo, .app .field > input {
		flex: none;
		height: 10px;
	}

	.app .field > input, .spin {
		padding-left: 2px;
		border: 1px solid #aaa;
		background: #fff;
	}

	.app .field > input:disabled {
		color: #888;
		background: #f0f0f0;
	}

	.wideLabel label {
		width: 49px;
	}

	.wideLabel .combo, .app .wideLabel > input {
		width: 154px;
	}

	.app .field .square {
		margin-left: auto;
	}

	.halves {
		display: grid;
		grid-template-columns: 99px 116px;
		gap: 6px;
	}

	.app .halves .field + h3 {
		margin: 4px 0 0;
	}

	.tick {
		display: flex;
		align-items: center;
		gap: 2px;
	}

	.app .tick input {
		width: 7px;
		height: 7px;
		border: 1px solid #888;
		appearance: none;
		background: #fff;
	}

	.app .tick input:checked {
		background: url("data:image/svg+xml,%3Csvg xmlns='http://www.w3.org/2000/svg' viewBox='0 0 5 5'%3E%3Cpath d='M0 2L2 4L5 0' fill='none' stroke='%23333' stroke-width='.8'/%3E%3C/svg%3E") #fff;
	}

	.point label {
		width: 11px;
	}

	.app .point > input {
		width: 70px;
	}

	.app .remove {
		width: 98px;
		height: 10px;
		color: #777;
		background: #ccc;
	}

	.angle label {
		width: 32px;
	}

	.app .angle > input {
		width: 67px;
	}

	.rowsField label {
		width: 28px;
	}

	.app .rowsField > input, .spin {
		box-sizing: border-box;
		width: 70px;
	}

	.spin {
		display: flex;
		height: 10px;
	}

	.spin input {
		flex: 1;
	}

	.spin svg {
		width: 6px;
		height: 8px;
		background: #e4e4e4;
	}

	.actions {
		display: flex;
		gap: 4px;
		padding: 6px;
	}

	.app .actions button {
		display: flex;
		align-items: center;
		justify-content: center;
		gap: 3px;
		width: 37px;
		height: 12px;
		border: 1px solid #c0c0c0;
		background: #e5e5e5;
	}

	.app .actions .default {
		border-color: #1777c2;
	}

	.spacer {
		flex: 1;
	}

	/* Sheet tabs */

	.sheets {
		display: flex;
		height: 10px;
	}

	.app .sheets button {
		padding: 0 1px 1px;
		background: #444;
		clip-path: polygon(0 0, 100% 0, calc(100% - 4px) 100%, 4px 100%);
	}

	.sheets span {
		display: block;
		padding: 0 5px;
		background: #d3d3d3;
		clip-path: polygon(0 0, 100% 0, calc(100% - 4px) 100%, 4px 100%);
	}

	.sheets .active span {
		background: #fff;
		font-weight: 700;
	}

	.app .sheets .addSheet {
		height: 8px;
		margin: 0 3px;
		padding: 0 2px;
		border: 1px solid #aaa;
		background: #eee;
		clip-path: none;
	}

	/* Properties palette */

	aside {
		width: 176px;
		box-sizing: border-box;
		padding: 7px 5px 0;
		border-left: 2px solid #8c8c8c;
	}

	.choice {
		display: flex;
	}

	.paletteTools {
		display: flex;
		gap: 4px;
		margin: 3px 0 4px;
	}

	.app .paletteTools button {
		display: grid;
		place-items: center;
		width: 13px;
		height: 13px;
		border: 1px solid #aaa;
		background: #eee;
	}

	.app .paletteTools .off {
		border-color: #d0d0d0;
		background: #d0d0d0;
	}

	.block {
		display: grid;
		gap: 1px;
		width: 150px;
		margin-bottom: 3px;
	}

	.app .block h2 {
		display: flex;
		align-items: center;
		box-sizing: border-box;
		height: 11px;
		margin-bottom: 4px;
		padding: 0 3px;
		border: 1px solid #b8bfd6;
		color: #707078;
		background: #dfe3fb;
		font-weight: 700;
	}

	.block h2 i {
		margin-left: auto;
		border: 2px solid transparent;
		border-top: 0;
		border-bottom-color: #888;
	}

	.property {
		display: flex;
		align-items: center;
	}

	.mark {
		width: 15px;
		padding-left: 5px;
		opacity: .7;
	}

	.app .property input {
		flex: 1;
		height: 12px;
		padding: 0 1px;
		border: 1px solid #b5bdc7;
		background: #b0cdec;
	}

	.strip {
		display: flex;
		flex-direction: column;
		align-items: center;
		gap: 2px;
		width: 12px;
		padding: 2px 0;
		box-sizing: border-box;
		background: #bdbdbd;
	}

	.strip strong {
		margin-top: auto;
		writing-mode: vertical-rl;
		transform: rotate(180deg);
	}

	.sideTabs {
		display: flex;
		flex-direction: column;
		width: 12px;
		box-sizing: border-box;
		padding-right: 2px;
		background: #f4f4f6;
	}

	.app .sideTabs button {
		padding: 6px 0;
		border: 1px solid #d0d0d0;
		border-width: 1px 1px 0 0;
		font-size: 5px;
		line-height: 8px;
		writing-mode: vertical-rl;
		transform: rotate(180deg);
	}

	.app .sideTabs .active {
		background: #fff;
	}

	.app .sideTabs .strong {
		font-weight: 700;
	}

	/* Command window */

	.command {
		background: #fff;
	}

	.commandTitle {
		display: flex;
		align-items: center;
		height: 10px;
		padding: 0 3px 0 2px;
		border-top: 1px solid #777;
		border-bottom: 1px solid #777;
		background: #c0c0c0;
	}

	.commandTitle strong {
		flex: 1;
	}

	.log {
		display: flex;
		height: 24px;
		margin-bottom: 8px;
		overflow: hidden;
	}

	.lines {
		display: flex;
		flex: 1;
		flex-direction: column;
		justify-content: flex-end;
		padding: 0 3px 2px;
	}

	.scroll {
		display: flex;
		flex-direction: column;
		align-items: center;
		justify-content: space-between;
		width: 7px;
		padding: 3px 0;
		margin-right: 3px;
		background: #f3f3f3;
	}

	.thumb {
		width: 7px;
		height: 4px;
		background: #c8c8c8;
	}

	.upArrow, .downArrow, .scaleList i {
		border: 2px solid transparent;
	}

	.upArrow {
		border-top: 0;
		border-bottom-color: #000;
	}

	.downArrow {
		border-top-color: #000;
		border-bottom: 0;
	}

	/* Status bar */

	.status {
		display: flex;
		align-items: center;
		gap: 4px;
		height: 17px;
	}

	.version {
		width: 369px;
		padding-left: 1px;
		box-sizing: border-box;
	}

	.statusTools {
		display: flex;
		justify-content: space-between;
		width: 145px;
	}

	.app .statusTools button {
		display: grid;
		place-items: center;
		width: 12px;
		height: 12px;
		border: 1px solid #c4c4c4;
		background: #e4e4e4;
	}

	.app .statusTools .on {
		border-color: #5b9dd4;
		background: #cbe4f8;
	}

	.scaleList {
		display: flex;
		align-items: center;
		justify-content: space-between;
	}

	.app .scaleList {
		width: 47px;
		height: 11px;
		margin-left: 3px;
		padding: 0 2px;
		border: 1px solid #bbb;
		background: #e4e4e4;
	}

	.scaleList i {
		border-width: 4px 3px 0;
		border-top-color: #222;
	}

	/* Taskbar */

	footer {
		display: flex;
		height: 20px;
		color: #fff;
		background: linear-gradient(90deg, #1f222c, #24242c 30%, #2f2624 50%, #2b2f2b 60%, #292c2a);
	}

	.appButton {
		display: grid;
		place-items: center;
		width: 25px;
	}

	.app .running {
		box-shadow: inset 0 -2px #76b9ed;
	}

	.app .current {
		background: #4a4d54;
	}

	.tray {
		display: flex;
		align-items: center;
		gap: 2px;
		margin-left: auto;
		padding-right: 14px;
	}

	.tray span {
		margin-left: 1px;
	}

	time {
		margin: 0 5px 0 2px;
		text-align: center;
	}

</style>
